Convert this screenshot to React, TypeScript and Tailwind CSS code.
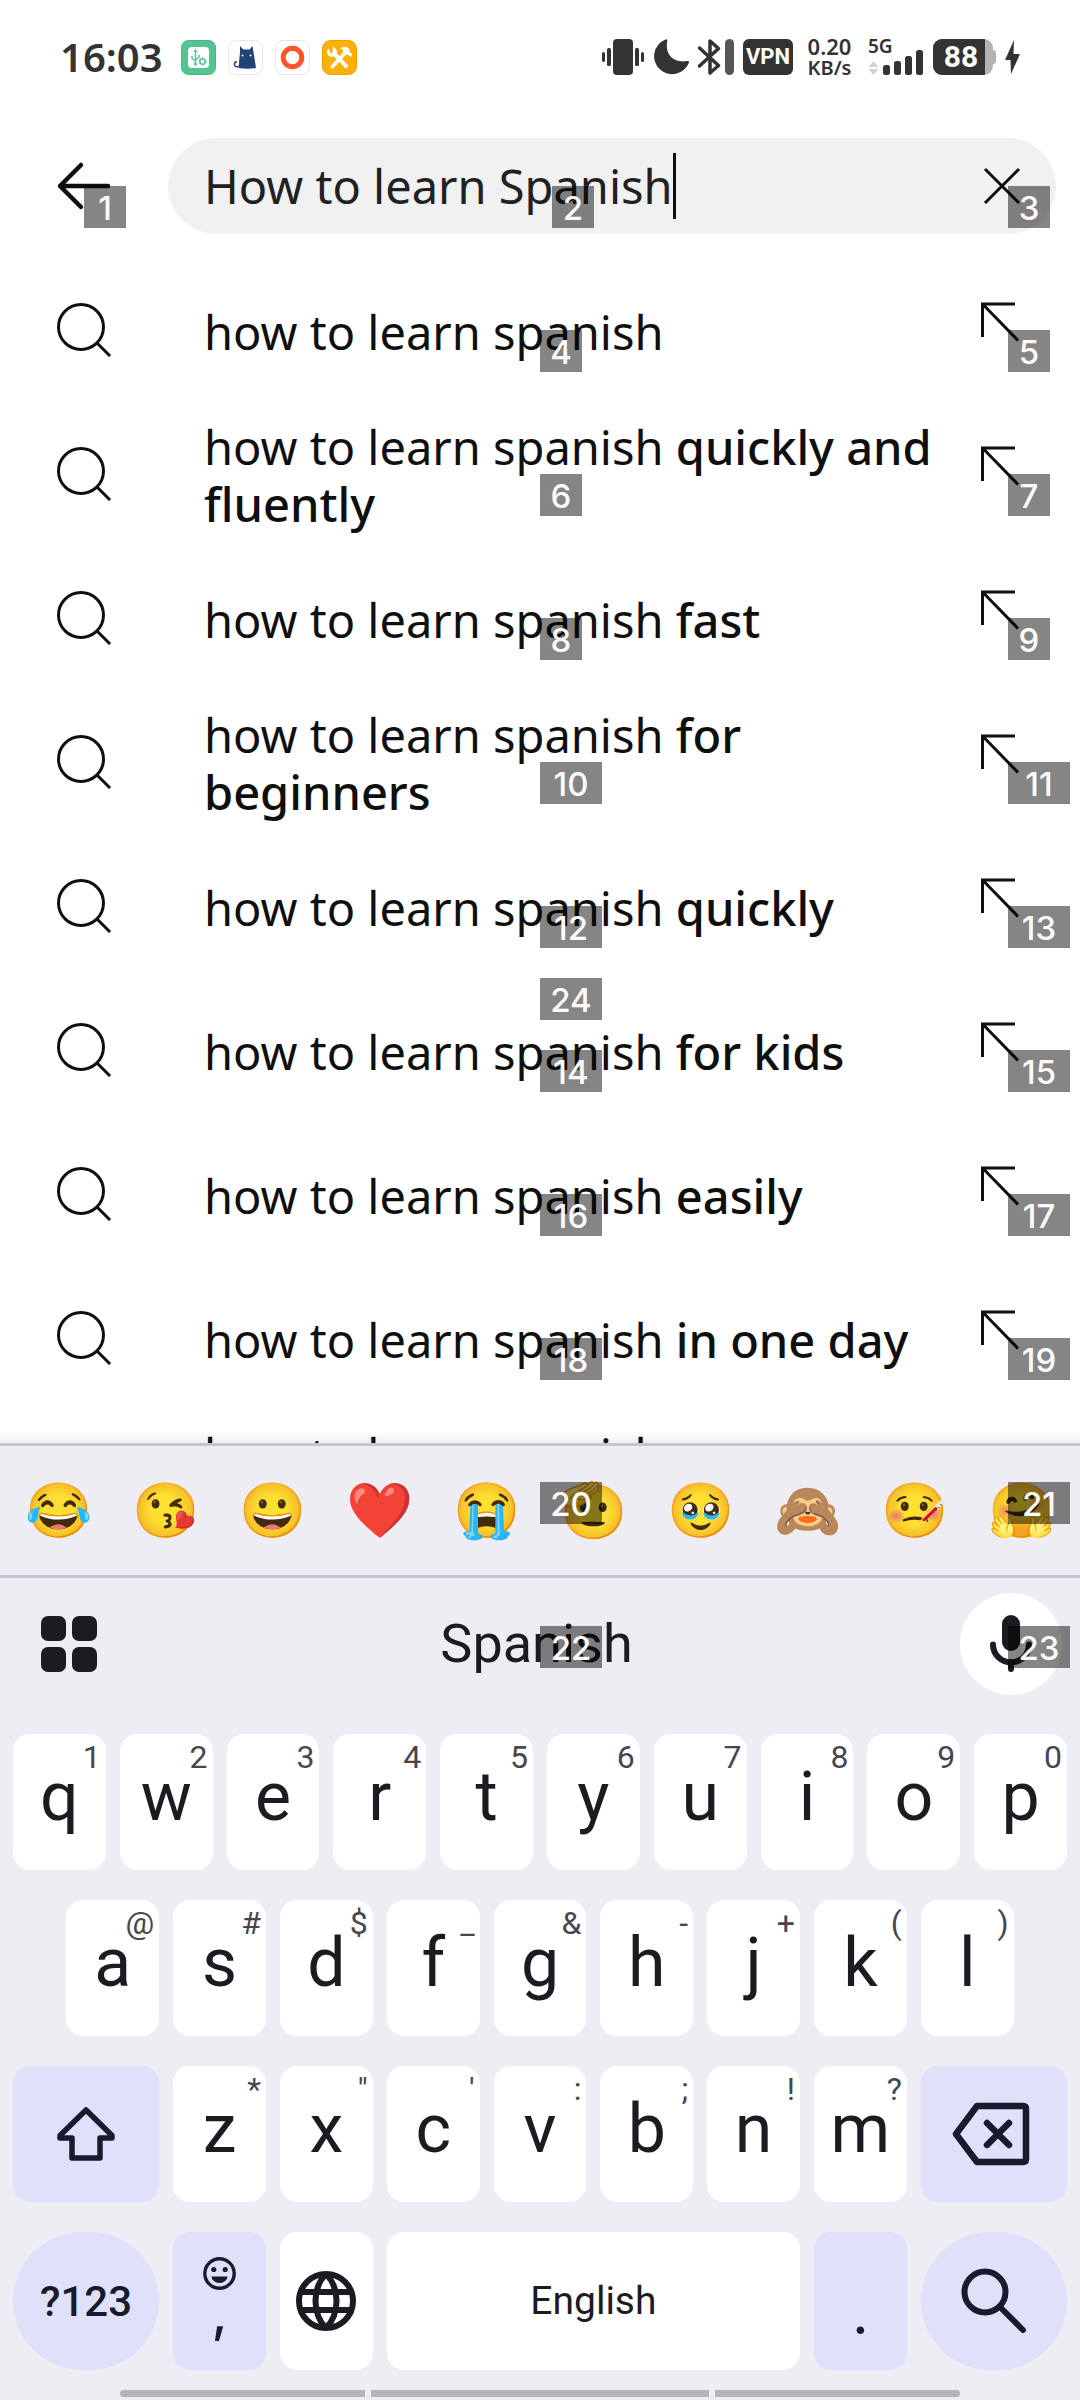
import { useState } from "react";

type Suggestion = { base: string; extra: string; marks: [string, string] | null };

const suggestions: Suggestion[] = [
  { base: "how to learn spanish", extra: "", marks: ["4", "5"] },
  { base: "how to learn spanish", extra: "quickly and fluently", marks: ["6", "7"] },
  { base: "how to learn spanish", extra: "fast", marks: ["8", "9"] },
  { base: "how to learn spanish", extra: "for beginners", marks: ["10", "11"] },
  { base: "how to learn spanish", extra: "quickly", marks: ["12", "13"] },
  { base: "how to learn spanish", extra: "for kids", marks: ["14", "15"] },
  { base: "how to learn spanish", extra: "easily", marks: ["16", "17"] },
  { base: "how to learn spanish", extra: "in one day", marks: ["18", "19"] },
  { base: "how to learn spanish", extra: "comprehensively", marks: null },
];

const emojis = ["😂", "😘", "😀", "❤️", "😭", "🫡", "🥹", "🙈", "🤒", "🤗"];

const row1: [string, string][] = [
  ["q", "1"], ["w", "2"], ["e", "3"], ["r", "4"], ["t", "5"],
  ["y", "6"], ["u", "7"], ["i", "8"], ["o", "9"], ["p", "0"],
];
const row2: [string, string][] = [
  ["a", "@"], ["s", "#"], ["d", "$"], ["f", "_"], ["g", "&"],
  ["h", "-"], ["j", "+"], ["k", "("], ["l", ")"],
];
const row3: [string, string][] = [
  ["z", "*"], ["x", '"'], ["c", "'"], ["v", ":"], ["b", ";"], ["n", "!"], ["m", "?"],
];

function Mark({ n, at }: { n: string; at: string }) {
  const width = n.length > 1 ? "w-[62px]" : "w-[42px]";
  return (
    <span
      className={`pointer-events-none absolute z-10 flex h-[42px] items-center justify-center bg-black/48 pt-[2px] font-['Inter'] text-[33px] leading-none font-medium text-[#fffafa] ${width} ${at}`}
    >
      {n}
    </span>
  );
}

function StatusBar() {
  return (
    <header className="flex h-[114px] shrink-0 items-center justify-between px-[60px] text-[#333333]">
      <div className="flex items-center">
        <time className="w-[121px] font-['Noto_Sans'] text-[40px] leading-none font-semibold">16:03</time>
        <div className="flex gap-[12px]">
          <svg width="35" height="35" viewBox="0 0 35 35" fill="none">
            <rect x="0.5" y="0.5" width="34" height="34" rx="7" fill="#52c592" stroke="#46b584" />
            <rect x="7" y="7" width="21" height="21" rx="4" fill="#fff" />
            <g stroke="#52c592" strokeWidth="1.4">
              <path d="M14.5 11v13M11 16v2.5l3.5 2.5M18 15v2.5l-3.5 2.5" />
              <circle cx="21.5" cy="21.5" r="2.6" />
              <path d="M21.5 17.5v1.5M21.5 24v1.5M17.5 21.5h1.5M24 21.5h1.5M18.7 18.7l1 1M23.3 23.3l1 1M24.3 18.7l-1 1M19.7 23.3l-1 1" />
            </g>
            <path d="M14.5 9l-2 3h4z" fill="#52c592" />
            <circle cx="14.5" cy="24" r="1.6" fill="#52c592" />
          </svg>
          <svg width="35" height="35" viewBox="0 0 35 35" fill="none">
            <rect x="0.5" y="0.5" width="34" height="34" rx="8" fill="#fff" stroke="#e6e6e6" />
            <path d="M12 6l3.500 3.500h6L24.500 6l1 6 2.500 16q-9 1.500-17.500 0l1.500-16z" fill="#1f4477" />
            <path d="M10.5 26.5q-4 1-4-2.500 0-2 2.500-2.500" stroke="#1f4477" strokeWidth="1.5" />
            <circle cx="14.5" cy="15.5" r="1" fill="#fff" />
            <circle cx="22.5" cy="15.5" r="1" fill="#fff" />
          </svg>
          <svg width="35" height="35" viewBox="0 0 35 35" fill="none">
            <rect x="0.5" y="0.5" width="34" height="34" rx="8" fill="#fff" stroke="#e6e6e6" />
            <circle cx="17.5" cy="17.5" r="9.3" stroke="#ff5429" strokeWidth="5" />
          </svg>
          <svg width="35" height="35" viewBox="0 0 35 35" fill="none">
            <rect x="0.5" y="0.5" width="34" height="34" rx="8" fill="#fab005" stroke="#eba000" />
            <path d="M11.500 13l12.500 13" stroke="#fff" strokeWidth="4" strokeLinecap="round" />
            <circle cx="10" cy="12" r="3.500" stroke="#fff" strokeWidth="3" />
            <path d="M5 5.500l5 0 1 5-3 1z" fill="#fab005" />
            <path d="M10.500 26.500l13-14" stroke="#fff" strokeWidth="3.800" strokeLinecap="round" />
            <path d="M18 8.500q5-3.500 9 0l.5 3.500 3 2-2 3-3-2.500-3 .5-2-3 .5-2.500z" fill="#fff" />
          </svg>
        </div>
      </div>

      <div className="flex items-center">
        <svg className="mr-[9px]" width="42" height="36" viewBox="0 0 42 36" fill="currentColor">
          <rect x="11" y="0" width="20" height="36" rx="4" />
          <rect x="0" y="13" width="3" height="10" rx="1.5" />
          <rect x="5" y="9" width="4" height="18" rx="1.5" />
          <rect x="33" y="9" width="4" height="18" rx="1.5" />
          <rect x="39" y="13" width="3" height="10" rx="1.5" />
        </svg>
        <svg className="mr-[9px]" width="36" height="36" viewBox="0 0 36 36" fill="currentColor">
          <path d="M12.5 0.5q2-1 1.800 1.500C11.500 15 20 24.500 34 22q2.500-.5 2 1.500A18 18 0 1 1 12.500.5z" />
        </svg>
        <svg className="mr-[9px]" width="36" height="36" viewBox="0 0 36 36" fill="none">
          <path
            d="M1.500 9l19 17.500-8.500 7.500V2l8.500 7.500L1.500 27"
            stroke="currentColor"
            strokeWidth="3.5"
            strokeLinejoin="round"
            strokeLinecap="round"
          />
          <rect x="27" y="0" width="9" height="36" rx="4.5" fill="#555555" />
        </svg>
        <span className="mr-[14px] flex h-[36px] w-[50px] items-center justify-center rounded-[6px] bg-[#333333] font-['Roboto'] text-[22px] leading-none font-bold text-white">
          VPN
        </span>
        <span className="mr-[16px] flex w-[45px] flex-col items-center font-['Noto_Sans'] text-[20px] leading-[21px] font-semibold whitespace-nowrap">
          <span className="text-[22px]">0.20</span>
          <span>KB/s</span>
        </span>
        <span className="relative mr-[10px] flex h-[36px] w-[55px]">
          <span className="font-['Noto_Sans'] text-[19px] leading-[14px] font-semibold">5G</span>
          <svg className="absolute inset-0" width="55" height="36" viewBox="0 0 55 36" fill="currentColor">
            <path d="M5.500 22l5 6h-10zM5.500 36l5-6h-10z" fill="#d4d4d4" />
            <rect x="15" y="26" width="7" height="10" rx="2.5" />
            <rect x="26" y="22" width="7" height="14" rx="2.5" />
            <rect x="37" y="17" width="7" height="19" rx="2.5" />
            <rect x="48" y="11" width="7" height="25" rx="2.5" />
          </svg>
        </span>
        <span className="mr-[9px] flex items-center">
          <span className="flex h-[36px] w-[60px] overflow-hidden rounded-[9px] bg-[#b3b3b3]">
            <span className="flex w-[52px] items-center justify-center bg-[#333333] pl-[4px] font-['Roboto'] text-[30px] leading-none font-bold text-white">
              88
            </span>
          </span>
          <span className="h-[14px] w-[3px] rounded-r-[3px] bg-[#b3b3b3]" />
        </span>
        <svg width="15" height="34" viewBox="0 0 15 34" fill="currentColor">
          <path d="M9 0L0 20h5.500L6 34l9-20H8.500z" />
        </svg>
      </div>
    </header>
  );
}

function Key({ letter, hint, first }: { letter: string; hint: string; first?: boolean }) {
  return (
    <button
      type="button"
      className={`relative mx-[7px] flex h-[136px] items-center justify-center rounded-[17px] bg-white pb-[10px] text-[68px] leading-none text-[#1b1b21] ${
        first ? "col-span-2 col-start-2" : "col-span-2"
      }`}
    >
      {letter}
      <span className="absolute top-[5px] right-[5px] text-[32px] leading-[36px] text-[#47464f]">
        {hint}
      </span>
    </button>
  );
}

export default function App() {
  const [query, setQuery] = useState("How to learn Spanish");
  return (
    <div className="flex h-screen flex-col overflow-hidden bg-white font-['Noto_Sans',sans-serif] text-[#0f0f0f]">
      <StatusBar />

      <div className="relative flex h-[144px] shrink-0 items-center pr-[24px] pl-[56px]">
        <button type="button" aria-label="Back" className="mr-[56px]">
          <svg width="56" height="50" viewBox="0 0 56 50" fill="none" stroke="currentColor" strokeWidth="4.5" strokeLinecap="round" strokeLinejoin="round">
            <path d="M25 4L4 25l21 21M4 25h48" />
          </svg>
        </button>
        <div className="flex h-[96px] flex-1 items-center justify-between rounded-full bg-[#f1f1f1] pr-[34px] pl-[36px]">
          <div className="flex items-center">
            <input
              type="text"
              aria-label="Search"
              value={query}
              onChange={(e) => setQuery(e.target.value)}
              className="field-sizing-content h-[66px] bg-transparent text-[47px] leading-[66px] text-[#212121] outline-none"
            />
            <span className="h-[66px] w-[3px] bg-[#0f0f0f]" />
          </div>
          <button type="button" aria-label="Clear">
            <svg width="40" height="40" viewBox="0 0 40 40" fill="none" stroke="currentColor" strokeWidth="3">
              <path d="M3 3l34 34M37 3L3 37" />
            </svg>
          </button>
        </div>
        <Mark n="1" at="left-[84px] bottom-[30px]" />
        <Mark n="2" at="left-[calc(50%+12px)] bottom-[30px]" />
        <Mark n="3" at="right-[30px] bottom-[30px]" />
      </div>

      <main className="relative min-h-0 flex-1 overflow-hidden pt-[2px]">
        <ul>
          {suggestions.map((s, i) => (
            <li key={i} className="relative flex h-[144px] items-center pr-[39px] pl-[56px]">
              <svg className="mr-[88px] shrink-0" width="60" height="60" viewBox="0 0 60 60" fill="none" stroke="currentColor" strokeWidth="3">
                <circle cx="25" cy="25" r="22.5" />
                <path d="M41 41l13 13" />
              </svg>
              <a href="#" className="flex-1 pr-[30px] text-[47px] leading-[57px]">
                {s.base} <span className="font-medium">{s.extra}</span>
              </a>
              <button type="button" aria-label="Use this suggestion">
                <svg width="60" height="60" viewBox="0 0 60 60" fill="none" stroke="currentColor" strokeWidth="3">
                  <path d="M1.500 35V2H34M2 2.500l35 36" />
                </svg>
              </button>
              {s.marks && (
                <>
                  <Mark n={s.marks[0]} at="left-1/2 top-[70px]" />
                  <Mark n={s.marks[1]} at="left-[calc(100%-72px)] top-[70px]" />
                </>
              )}
            </li>
          ))}
        </ul>
        <Mark n="24" at="left-1/2 top-[720px]" />
        <div className="absolute inset-x-0 bottom-0 h-[12px] bg-linear-to-b from-black/0 to-black/6" />
      </main>

      <section aria-label="Keyboard" className="shrink-0 bg-[#eeedf4] font-['Roboto',sans-serif] text-[#1b1b21]">
        <div className="relative grid h-[135px] grid-cols-10 items-center border-y-[3px] border-[#c6c5d0] px-[5px]">
          {emojis.map((e) => (
            <button key={e} type="button" className="flex items-center justify-center font-['Noto_Color_Emoji',sans-serif] text-[54px] leading-[72px]">
              {e}
            </button>
          ))}
          <Mark n="20" at="left-1/2 top-[36px]" />
          <Mark n="21" at="left-[calc(100%-72px)] top-[36px]" />
        </div>

        <div className="relative flex h-[132px] items-center justify-between pr-[18px] pl-[41px]">
          <button type="button" aria-label="Tools">
            <svg width="56" height="56" viewBox="0 0 56 56" fill="currentColor">
              <rect x="0" y="0" width="25" height="25" rx="7" />
              <rect x="31" y="0" width="25" height="25" rx="7" />
              <rect x="0" y="31" width="25" height="25" rx="7" />
              <rect x="31" y="31" width="25" height="25" rx="7" />
            </svg>
          </button>
          <button type="button" className="pl-[16px] text-[54px] leading-none">
            Spanish
          </button>
          <button type="button" aria-label="Voice input" className="flex h-[102px] w-[102px] items-center justify-center rounded-full bg-white">
            <svg width="44" height="60" viewBox="0 0 44 60" fill="none">
              <rect x="13" y="1" width="18" height="36" rx="9" fill="currentColor" />
              <path d="M4 30.500a18 18 0 0 0 36 0M22 48v7" stroke="currentColor" strokeWidth="6" strokeLinecap="round" />
            </svg>
          </button>
          <Mark n="22" at="left-1/2 top-[48px]" />
          <Mark n="23" at="left-[calc(100%-72px)] top-[48px]" />
        </div>

        <div className="mt-[24px] grid grid-cols-[repeat(20,minmax(0,1fr))] gap-y-[30px] px-[6px]">
          {row1.map(([l, h]) => (
            <Key key={l} letter={l} hint={h} />
          ))}
          {row2.map(([l, h], i) => (
            <Key key={l} letter={l} hint={h} first={i === 0} />
          ))}
          <button type="button" aria-label="Shift" className="col-span-3 col-start-1 mx-[7px] flex h-[136px] items-center justify-center rounded-[17px] bg-[#dfe0fa] text-[#171b2c]">
            <svg width="60" height="60" viewBox="0 0 60 60" fill="none" stroke="currentColor" strokeWidth="5.5" strokeLinejoin="round">
              <path d="M30 6L4 31.500V34H16V54H44V34H56V31.500Z" />
            </svg>
          </button>
          {row3.map(([l, h]) => (
            <Key key={l} letter={l} hint={h} />
          ))}
          <button type="button" aria-label="Backspace" className="col-span-3 mx-[7px] flex h-[136px] items-center justify-center rounded-[17px] bg-[#dfe0fa] pr-[6px] text-[#171b2c]">
            <svg width="78" height="64" viewBox="0 0 78 64" fill="none" stroke="currentColor" strokeWidth="6.5" strokeLinejoin="round" strokeLinecap="round">
              <path d="M25 4H71q3 0 3 3V57q0 3-3 3H25L4 32ZM35 21l22 22M57 21L35 43" />
            </svg>
          </button>

          <button type="button" className="col-span-3 mx-[7px] flex h-[138px] items-center justify-center rounded-full bg-[#dfe0fa] text-[42px] font-medium text-[#171b2c]">
            ?123
          </button>
          <button type="button" aria-label="Comma and emoji" className="col-span-2 mx-[7px] flex h-[138px] flex-col items-center rounded-[17px] bg-[#dfe0fa] pt-[25px] text-[#171b2c]">
            <svg width="33" height="33" viewBox="0 0 33 33" fill="none">
              <circle cx="16.5" cy="16.5" r="14.7" stroke="currentColor" strokeWidth="3.4" />
              <circle cx="10.8" cy="12.5" r="2.6" fill="currentColor" />
              <circle cx="22.2" cy="12.5" r="2.6" fill="currentColor" />
              <path d="M8.500 19.500h16a8 6.500 0 0 1-16 0z" fill="currentColor" />
            </svg>
            <span className="font-['Inter'] text-[52px] leading-[48px] font-medium">,</span>
          </button>
          <button type="button" aria-label="Language" className="col-span-2 mx-[7px] flex h-[138px] items-center justify-center rounded-[17px] bg-white">
            <svg width="60" height="60" viewBox="0 0 60 60" fill="none" stroke="currentColor" strokeWidth="6">
              <circle cx="30" cy="30" r="27" />
              <path d="M5 21h50M5 39h50M30 3C16 17 16 43 30 57M30 3C44 17 44 43 30 57" />
            </svg>
          </button>
          <button type="button" className="col-span-8 mx-[7px] flex h-[138px] items-center justify-center rounded-[17px] bg-white text-[39px]">
            English
          </button>
          <button type="button" className="col-span-2 mx-[7px] flex h-[138px] items-end justify-center rounded-[17px] bg-[#dfe0fa] pb-[30px] font-['Inter'] text-[52px] leading-[48px] font-medium text-[#171b2c]">
            .
          </button>
          <button type="button" aria-label="Search" className="col-span-3 mx-[7px] flex h-[138px] items-center justify-center rounded-full bg-[#dfe0fa] text-[#171b2c]">
            <svg width="66" height="66" viewBox="0 0 66 66" fill="none" stroke="currentColor" strokeWidth="6" strokeLinecap="round">
              <circle cx="24" cy="24" r="20.5" />
              <path d="M39 39l23 23" />
            </svg>
          </button>
        </div>

        <div className="grid grid-cols-[245fr_338fr_245fr] gap-[6px] px-[120px] pt-[20px] pb-[3px]">
          <span className="h-[7px] rounded-l-full bg-[#b5b4ba]" />
          <span className="h-[7px] bg-[#b5b4ba]" />
          <span className="h-[7px] rounded-r-full bg-[#b5b4ba]" />
        </div>
      </section>
    </div>
  );
}
